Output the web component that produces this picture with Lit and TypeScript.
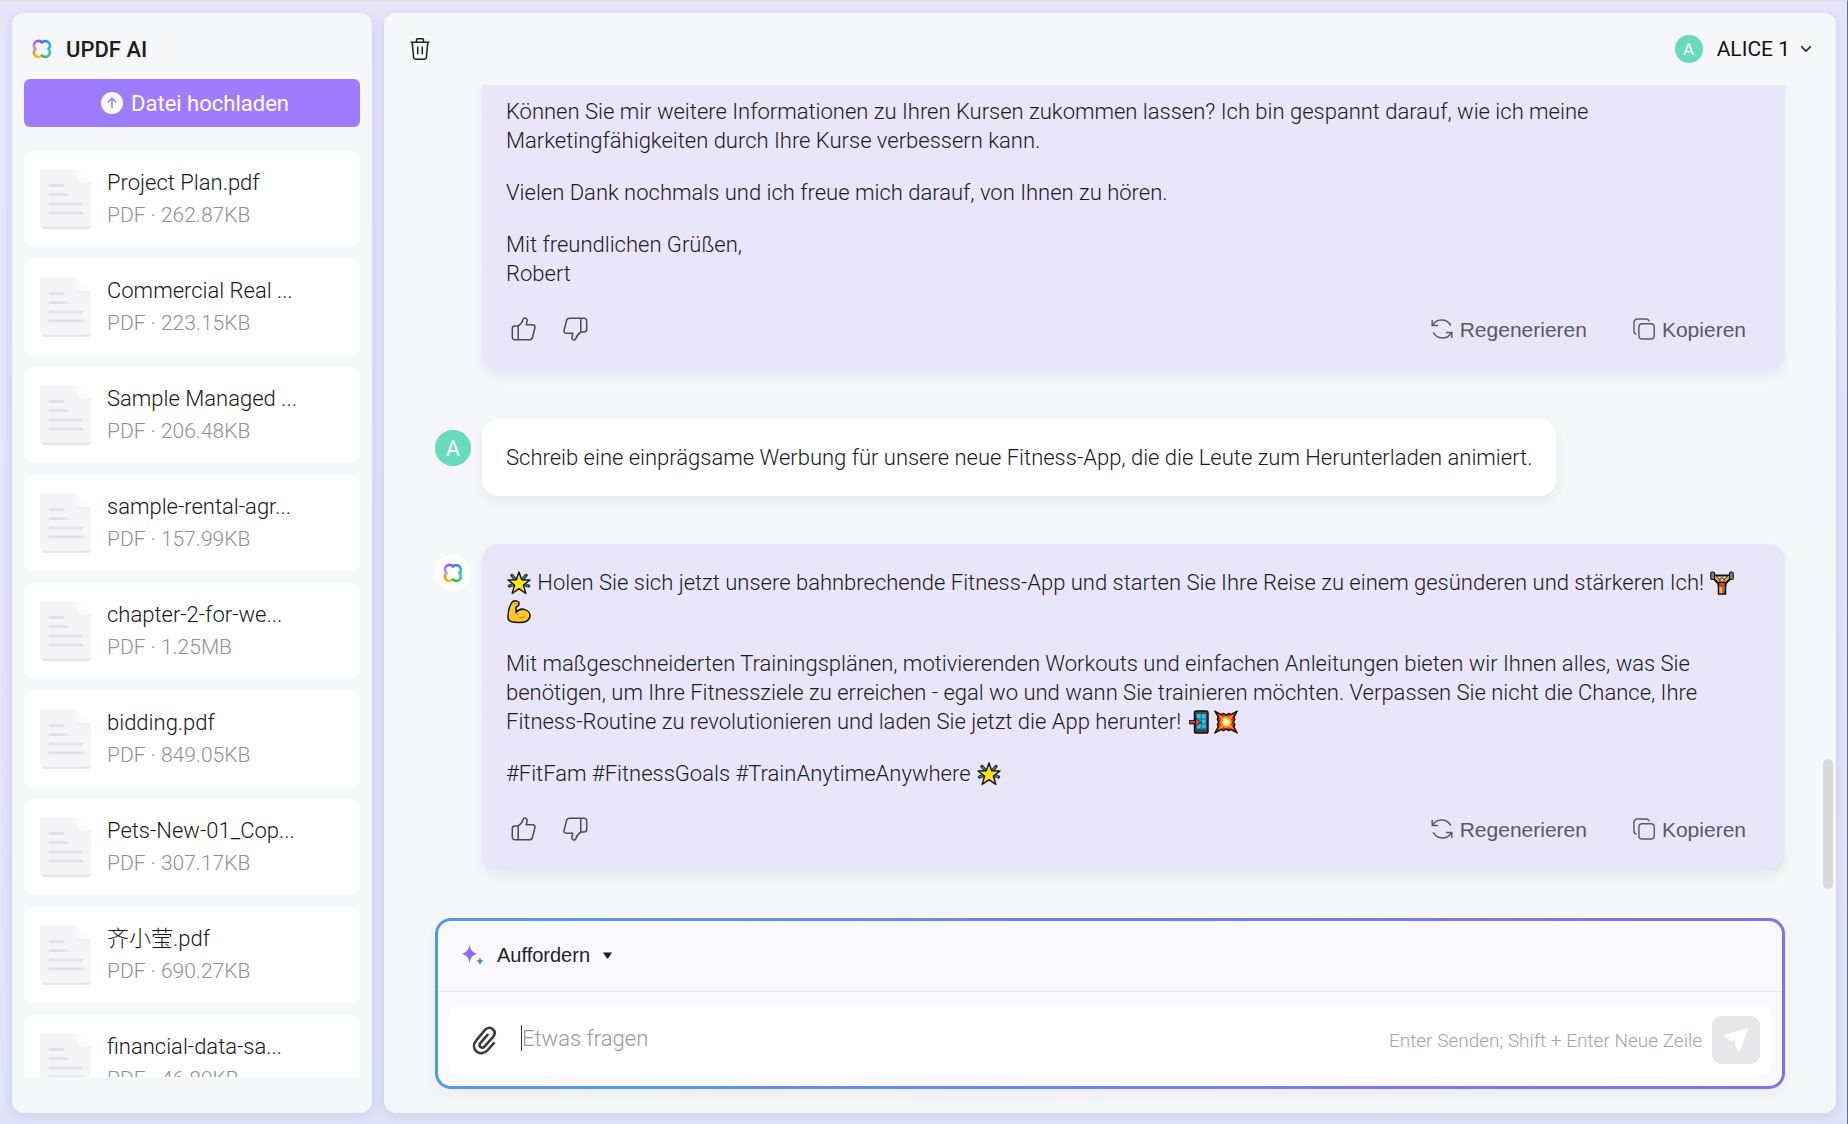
import { LitElement, html, svg, css, nothing, type TemplateResult } from "lit";
import { customElement, property } from "lit/decorators.js";

interface PdfFile {
  name: string;
  size: string;
}

const files: PdfFile[] = [
  { name: "Project Plan.pdf", size: "262.87KB" },
  { name: "Commercial Real ...", size: "223.15KB" },
  { name: "Sample Managed ...", size: "206.48KB" },
  { name: "sample-rental-agr...", size: "157.99KB" },
  { name: "chapter-2-for-we...", size: "1.25MB" },
  { name: "bidding.pdf", size: "849.05KB" },
  { name: "Pets-New-01_Cop...", size: "307.17KB" },
  { name: "齐小莹.pdf", size: "690.27KB" },
  { name: "financial-data-sa...", size: "46.89KB" },
];

const logo = html`<svg width="22" height="22" viewBox="0 0 22 22" fill="none" aria-hidden="true">
  <defs>
    <linearGradient id="tl" x1="0" y1="1" x2="1" y2="0"><stop offset="0" stop-color="#d08bf5" /><stop offset="1" stop-color="#8a4fe6" /></linearGradient>
    <linearGradient id="tr" x1="0" y1="0" x2="1" y2="1"><stop offset="0" stop-color="#2f7df0" /><stop offset="1" stop-color="#35b8ee" /></linearGradient>
    <linearGradient id="br" x1="1" y1="0" x2="0" y2="1"><stop offset="0" stop-color="#3fd6ae" /><stop offset="1" stop-color="#22b868" /></linearGradient>
    <linearGradient id="bl" x1="0" y1="0" x2="1" y2="1"><stop offset="0" stop-color="#f08a24" /><stop offset="1" stop-color="#fbc916" /></linearGradient>
  </defs>
  <g stroke-width="2.700" stroke-linecap="round">
    <path stroke="url(#bl)" d="M4.200 11.400A4.300 4.300 0 1 0 10.600 17.600" />
    <path stroke="url(#br)" d="M11.200 17.600A4.300 4.300 0 1 0 17.600 11.300" />
    <path stroke="url(#tl)" d="M4.200 10.800A4.300 4.300 0 1 1 10.800 4.300" />
    <path stroke="url(#tr)" d="M11.100 4.400A4.300 4.300 0 1 1 17.600 10.800" />
  </g>
</svg>`;

const uploadIcon = html`<svg width="22" height="22" viewBox="0 0 22 22" fill="none" aria-hidden="true">
  <circle cx="11" cy="11" r="11" fill="#fff" />
  <path d="M11 16V6.4M6.9 10.2 11 6.2l4.1 4" stroke="#9f7cff" stroke-width="1.5" />
</svg>`;

const fileIcon = html`<svg width="54" height="62" viewBox="0 0 54 62" fill="none" aria-hidden="true">
  <path d="M6 2h31l15 15v40a4 4 0 0 1-4 4H6a4 4 0 0 1-4-4V6a4 4 0 0 1 4-4z" fill="#e4e4e9" />
  <path d="M6 1h31l15 15v39a4 4 0 0 1-4 4H5a4 4 0 0 1-4-4V5a4 4 0 0 1 4-4z" fill="#f5f5f8" />
  <path d="M37 1l15 15H41a4 4 0 0 1-4-4z" fill="#fbfbfd" />
  <path d="M37 12a4 4 0 0 0 4 4h11" stroke="#ececf0" />
  <path d="M11 17.500h13M11 26.500h17M11 36h31M11 45h32" stroke="#e3e3e7" stroke-width="3" stroke-linecap="round" />
</svg>`;

const trashIcon = html`<svg width="20" height="24" viewBox="0 0 20 24" fill="none" stroke="#1f1f24" stroke-width="1.5" stroke-linejoin="round" aria-hidden="true">
  <path d="M.5 5.200h19M6.500 5V2.800a1 1 0 0 1 1-1h5a1 1 0 0 1 1 1V5M2.200 5.400l1.400 15a2 2 0 0 0 2 1.800h8.800a2 2 0 0 0 2-1.800l1.400-15M7.700 9.500v7.800M12.300 9.500v7.800" />
</svg>`;

const chevron = html`<svg width="12" height="8" viewBox="0 0 12 8" fill="none" aria-hidden="true"><path d="M1.200 1.200 6 6l4.800-4.800" stroke="#222" stroke-width="1.600" /></svg>`;

const thumbShape = svg`
  <path d="M7.200 9.500v13.300H4A2.700 2.700 0 0 1 1.300 20V11.600A2.700 2.700 0 0 1 4 9H7c2.300-1.400 4.200-3.300 5-6.300.3-1.200 1-1.700 2-1.600 1.600.2 2.400 1.500 2.100 3.200l-.9 3.400h6.200c1.900 0 2.900 1.300 2.500 3.100l-2.400 9.400c-.4 1.700-1.500 2.600-3.200 2.600H7.200" />`;
const thumbUp = html`<svg width="25" height="24" viewBox="0 0 25 24" fill="none" stroke="#4d4b59" stroke-width="1.500" stroke-linejoin="round" aria-hidden="true">${thumbShape}</svg>`;
const thumbDown = html`<svg width="25" height="24" viewBox="0 0 25 24" fill="none" stroke="#4d4b59" stroke-width="1.500" stroke-linejoin="round" aria-hidden="true"><g transform="rotate(180 12.500 12)">${thumbShape}</g></svg>`;

const regenIcon = html`<svg width="22" height="22" viewBox="0 0 22 22" fill="none" stroke="#5b5966" stroke-width="1.500" aria-hidden="true">
  <path d="M1.200 2v5.600h5.800M1.600 7.400C5 .6 15.500-.2 19.800 7.600M20.800 20v-5.600H15M20.400 14.600C17 21.400 6.500 22.200 2.200 14.400" />
</svg>`;

const copyIcon = html`<svg width="22" height="22" viewBox="0 0 23 23" fill="none" stroke="#5b5966" stroke-width="1.500" aria-hidden="true">
  <rect x="6.200" y="6" width="16" height="16" rx="3.500" />
  <path d="M17 3.500C16.500 1.800 15.300 1 13.500 1H4.500A3.500 3.500 0 0 0 1 4.500v9.200C1 15.500 1.800 16.700 3.600 17" />
</svg>`;

const sparkle = html`<svg width="22" height="22" viewBox="0 0 22 22" aria-hidden="true">
  <defs><linearGradient id="sp" x1="0" y1="0" x2="1" y2="1"><stop offset="0" stop-color="#a06bff" /><stop offset="1" stop-color="#7b6cf0" /></linearGradient></defs>
  <path d="M7.500.5C8.600 6 10 8 15 9.700 10 11.400 8.600 13.400 7.500 19 6.400 13.400 5 11.400 0 9.700 5 8 6.400 6 7.500.5z" fill="url(#sp)" />
  <path d="M18 13c.6 2.600 1.200 3.400 3.800 4-2.600.8-3.200 1.500-3.800 4.200-.6-2.700-1.200-3.400-3.800-4.200 2.600-.6 3.200-1.400 3.800-4z" fill="#3f86e6" />
</svg>`;

const clipIcon = html`<svg width="26" height="30" viewBox="0 0 26 30" fill="none" stroke="#3c3c40" stroke-width="2.600" stroke-linecap="round" aria-hidden="true">
  <path d="M22.800 18.200l-6 6.800c-3.300 3.700-8 4.200-11.300 1.400-3.300-2.900-3.400-7.400-.2-11.100L13.800 5.200c2.400-2.700 5.700-3 8-1 2.400 2.100 2.400 5.200.1 7.900L13.700 21.400c-1.300 1.500-3 1.600-4.200.6-1.300-1.100-1.300-2.600 0-4.200l7-8" />
</svg>`;

const sendIcon = html`<svg width="26" height="26" viewBox="0 0 26 26" aria-hidden="true">
  <path d="M24.300 1.300 1.300 8c-1 .3-1.100 1.300-.2 1.900l8.300 4.300c1-.7 3-2.500 4.700-4.200-1.100 1.900-2.500 4.300-2.900 5.400l3.700 8.600c.5 1 1.500 1 2 0L25 2.300c.3-.8 0-1.200-.7-1z" fill="#fff" />
</svg>`;

/* Pictograms used inside message text */
const emojiArt = {
  star: {
    label: "🌟",
    art: svg`<g stroke="#1c2b33" stroke-width="3.400" stroke-linecap="round"><path d="M5 4.500l3 3.500M19 4.500l-3 3.500M2.500 15l4-1.500M21.500 15l-4-1.500" /></g>
      <path d="M5 4.500l3 3.500M19 4.500l-3 3.500M2.500 15l4-1.500M21.500 15l-4-1.500" stroke="#2b8fa8" stroke-width="1.400" />
      <path d="M12 1l2.700 7.800 8.300.2-6.600 5 2.400 8.500L12 17.600 5.200 22.500 7.600 14 1 9l8.300-.2z" fill="#ffe21a" stroke="#111" stroke-width="1.400" stroke-linejoin="round" />`,
  },
  lifter: {
    label: "🏋️",
    art: svg`<path d="M3 4.500h18" stroke="#111" stroke-width="2" />
      <path d="M4 6l6 6v3M20 6l-6 6v3" stroke="#111" stroke-width="5" fill="none" />
      <path d="M8.500 11h7v12h-7z" fill="#e33a22" stroke="#111" stroke-width="1.500" />
      <path d="M4.500 5.500l5 5M19.500 5.500l-5 5" stroke="#f8b52c" stroke-width="2.400" />
      <circle cx="12" cy="9" r="2.300" fill="#f8b52c" stroke="#111" stroke-width=".8" />
      <path d="M9.300 16h3v6.200h-3z" fill="#f8b52c" /><path d="M12.300 16h2.400v4h-2.400z" fill="#2e8fc4" />
      <rect x=".8" y="1" width="3.600" height="7.500" rx="1.200" fill="#8a8a8a" stroke="#111" stroke-width="1.200" />
      <rect x="19.600" y="1" width="3.600" height="7.500" rx="1.200" fill="#8a8a8a" stroke="#111" stroke-width="1.200" />`,
  },
  arm: {
    label: "💪",
    art: svg`<path d="M5.500 1.600C8 .2 11.500.6 12 3c.3 1.600-.6 3-2 3.600L9 7.400v5.200c2.500-3.200 6-4 9-3 4 1.300 5.600 4.600 4.800 7.600-1.200 4.200-6 5.400-11 5.400C6.500 22.600 2 21.800 1.200 19 .7 13 2 6 5.500 1.600z" fill="#fcc62f" stroke="#111" stroke-width="1.500" stroke-linejoin="round" />
      <path d="M9 12.600c1 .6 1.500 1.500 1.700 2.600M12.500 17.500c2 .6 4 .2 5.500-1.300M7.600 3.400l2.400.3" stroke="#b9781a" stroke-width="1" fill="none" />`,
  },
  phone: {
    label: "📲",
    art: svg`<rect x="6.500" y="1" width="13.500" height="22" rx="1.800" fill="#3d4a52" stroke="#111" stroke-width="1.500" />
      <path d="M8.800 4h9v14.500h-9z" fill="#2fc0e8" /><path d="M8.800 9h9M8.800 13.800h9M13.300 4v14.500" stroke="#16627d" stroke-width=".9" />
      <path d="M1 12.200h7.500" stroke="#111" stroke-width="4.200" /><path d="M1.500 12.200h7" stroke="#e8462a" stroke-width="2" /><path d="M7.500 8l5.200 4.200-5.200 4.200z" fill="#e8462a" stroke="#111" stroke-width=".8" />`,
  },
  boom: {
    label: "💥",
    art: svg`<path d="M.8 1l6.300 3.500L9.500 3.400 12 5l2.800-1.600 2 1.100L23.200 1l-3.400 6.300 1 2.200L19.300 12l1.500 2.700-1 2.200 3.400 6.100-6.300-3.400-2.200 1L12 19.200l-2.600 1.400-2.300-1L.8 23l3.500-6.300-1-2.200L4.700 12 3.300 9.300l1-2.200z" fill="#d92c1a" stroke="#111" stroke-width="1.400" stroke-linejoin="round" />
      <path d="M4.500 4.500l5 2.400L12 5.800l2.600 1.100 5-2.400-2.400 5L18.300 12l-1.100 2.600 2.400 5-5-2.400L12 18.300l-2.500-1.100-5 2.400 2.400-5L5.800 12l1.100-2.500z" fill="#fb8c1e" />
      <path d="M12 7.500l1.300 2.200 2.700-.6-.8 2.600 1.600 1.700-2.300.7-.3 2.400-2.200-1.200-2.400 1-.1-2.500-2-1.400 1.700-1.600-.6-2.500 2.400.5z" fill="#fff0a0" />`,
  },
};

const emoji = (name: keyof typeof emojiArt) =>
  html`<svg class="emoji" viewBox="0 0 24 24" role="img" aria-label=${emojiArt[name].label}>${emojiArt[name].art}</svg>`;

const controls = css`
  * {
    box-sizing: border-box;
  }
  button,
  input {
    font: inherit;
    color: inherit;
    background: none;
    border: 0;
    padding: 0;
    margin: 0;
  }
  button {
    display: flex;
    align-items: center;
    cursor: pointer;
  }
  svg {
    display: block;
    flex: none;
  }
`;

@customElement("file-sidebar")
class FileSidebar extends LitElement {
  static styles = [
    controls,
    css`
      :host {
        display: flex;
        flex-direction: column;
        padding: 12px 12px 36px;
        min-height: 0;
      }
      .brand {
        display: flex;
        align-items: center;
        gap: 13px;
        height: 48px;
        padding-left: 7px;
        margin: 0 0 6px;
        font-size: 22px;
        font-weight: 500;
        color: #1d1d20;
      }
      .upload {
        justify-content: center;
        gap: 8px;
        height: 48px;
        padding-left: 6px;
        flex: none;
        border-radius: 6px;
        background: #9f7cff;
        color: #fff;
        font-size: 22px;
        font-weight: 400;
      }
      .list {
        list-style: none;
        margin: 24px 0 0;
        padding: 0;
        flex: 1;
        min-height: 0;
        overflow: hidden;
        display: flex;
        flex-direction: column;
        gap: 12px;
      }
      .card {
        display: flex;
        align-items: center;
        gap: 14px;
        flex: none;
        height: 96px;
        padding: 0 15px;
        border-radius: 9px;
        background: #fff;
      }
      .name,
      .meta {
        line-height: 33px;
        white-space: nowrap;
      }
      .name {
        font-size: 22px;
        color: #18181b;
      }
      .meta {
        font-size: 21px;
        color: #8f8f95;
      }
    `,
  ];

  render() {
    return html`
      <h1 class="brand">${logo}<span>UPDF AI</span></h1>
      <button class="upload" type="button">${uploadIcon}<span>Datei hochladen</span></button>
      <ul class="list">
        ${files.map(
          (f) => html`<li class="card">
            ${fileIcon}
            <div>
              <div class="name">${f.name}</div>
              <div class="meta">PDF · ${f.size}</div>
            </div>
          </li>`,
        )}
      </ul>
    `;
  }
}

@customElement("chat-message")
class ChatMessage extends LitElement {
  @property() from: "user" | "assistant" = "assistant";
  @property({ type: Boolean, reflect: true }) continued = false;

  static styles = [
    controls,
    css`
      :host {
        display: grid;
        grid-template-columns: 36px minmax(0, 1fr);
        column-gap: 11px;
        flex: none;
      }
      .avatar {
        width: 36px;
        height: 36px;
        margin-top: 11px;
        border-radius: 18px;
        display: grid;
        place-items: center;
        background: #66dcbc;
        color: #fff;
        font-size: 22px;
        font-weight: 400;
      }
      .avatar.assistant {
        background: #fff;
      }
      .bubble {
        grid-column: 2;
        justify-self: start;
        padding: 24px;
        border-radius: 16px;
        background: #fff;
        box-shadow: 0 6px 12px rgba(60, 60, 90, 0.07);
      }
      .bubble.assistant {
        justify-self: stretch;
        background: #e9e6fa;
      }
      :host([continued]) .bubble {
        padding-top: 12px;
        border-radius: 0 0 16px 16px;
      }
      .text {
        display: flex;
        flex-direction: column;
        gap: 23px;
      }
      ::slotted(p) {
        margin: 0;
      }
      .actions {
        display: flex;
        align-items: center;
        height: 36px;
        margin-top: 23px;
        padding: 0 15px 0 5px;
        gap: 27px;
        color: #5b5966;
        font-family: "Liberation Sans", Arial, sans-serif;
        font-size: 21px;
      }
      .actions .labelled {
        gap: 7px;
      }
      .spacer {
        flex: 1;
      }
      .copy {
        margin-left: 19px;
      }
    `,
  ];

  render() {
    const ai = this.from === "assistant";
    return html`
      ${this.continued ? nothing : html`<div class="avatar ${this.from}">${ai ? logo : "A"}</div>`}
      <div class="bubble ${this.from}">
        <div class="text"><slot></slot></div>
        ${ai
          ? html`<div class="actions">
              <button type="button" aria-label="Gefällt mir">${thumbUp}</button>
              <button type="button" aria-label="Gefällt mir nicht">${thumbDown}</button>
              <span class="spacer"></span>
              <button type="button" class="labelled">${regenIcon}<span>Regenerieren</span></button>
              <button type="button" class="labelled copy">${copyIcon}<span>Kopieren</span></button>
            </div>`
          : nothing}
      </div>
    `;
  }
}

@customElement("prompt-composer")
class PromptComposer extends LitElement {
  static styles = [
    controls,
    css`
      :host {
        display: block;
        box-sizing: border-box;
        flex: none;
        border: 3px solid transparent;
        border-radius: 16px;
        background:
          linear-gradient(#f9f8fe, #f9f8fe) padding-box,
          linear-gradient(90deg, #539be9, #6f82e6 50%, #8570e8) border-box;
        box-shadow: 0 6px 12px rgba(60, 60, 90, 0.06);
      }
      .bar {
        display: flex;
        align-items: center;
        height: 71px;
        padding: 0 24px 2px;
        border-bottom: 1px solid #e8e7f5;
      }
      .prompt {
        gap: 13px;
        font-family: "Liberation Sans", Arial, sans-serif;
        font-size: 20px;
        color: #232326;
      }
      .row {
        display: flex;
        align-items: center;
        height: 72px;
        margin: 12px 10px 10px;
        padding: 0 12px 0 23px;
        border-radius: 14px;
        background: #fff;
      }
      .caret {
        width: 1px;
        height: 26px;
        margin: 0 0 4px 24px;
        background: #333;
      }
      .ask {
        flex: 1;
        min-width: 0;
        height: 32px;
        margin-bottom: 4px;
        font-size: 22px;
        outline: none;
      }
      .ask::placeholder {
        color: #98989d;
        opacity: 1;
      }
      .hint {
        margin-right: 10px;
        font-size: 19px;
        color: #a3a3a7;
        white-space: nowrap;
      }
      .send {
        justify-content: center;
        width: 48px;
        height: 48px;
        border-radius: 9px;
        background: #e8e8ea;
      }
    `,
  ];

  render() {
    return html`
      <div class="bar">
        <button class="prompt" type="button">
          ${sparkle}<span>Auffordern</span>
          <svg width="9" height="7" viewBox="0 0 9 7" aria-hidden="true"><path d="M0 .5h9L5 6.500H4z" fill="#1c1c1f" /></svg>
        </button>
      </div>
      <div class="row">
        <button type="button" aria-label="Anhang">${clipIcon}</button>
        <span class="caret"></span>
        <input class="ask" type="text" placeholder="Etwas fragen" aria-label="Etwas fragen" />
        <span class="hint">Enter Senden; Shift + Enter Neue Zeile</span>
        <button class="send" type="button" aria-label="Senden">${sendIcon}</button>
      </div>
    `;
  }
}

@customElement("app-root")
class AppRoot extends LitElement {
  static styles = [
    controls,
    css`
      :host {
        display: grid;
        grid-template-columns: 360px minmax(0, 1fr);
        gap: 12px;
        box-sizing: border-box;
        height: 100vh;
        overflow: hidden;
        padding: 12px 11px 11px 12px;
        border-top: 1px solid #dedde4;
        border-right: 1px solid #6b6a88;
        background: linear-gradient(180deg, #e8e5fb 0%, #e5e2fa 60%, #e0e5f9 100%);
        font-family: Roboto, "Noto Sans CJK SC", sans-serif;
        font-weight: 300;
        color: #1b1a26;
      }
      .panel {
        border-radius: 12px;
        background: #f6f7f9;
        box-shadow: 0 2px 12px rgba(90, 90, 150, 0.18);
        min-height: 0;
      }
      .chat {
        display: grid;
        grid-template-columns: minmax(0, 1fr) 10px;
        grid-template-rows: 72px minmax(0, 1fr);
        padding-right: 3px;
      }
      .head {
        grid-column: 1 / -1;
        display: flex;
        align-items: center;
        justify-content: space-between;
        padding: 0 21px 0 26px;
      }
      .account {
        gap: 14px;
        font-size: 21px;
        font-weight: 400;
        color: #111;
      }
      .badge {
        display: grid;
        place-items: center;
        width: 28px;
        height: 28px;
        border-radius: 14px;
        background: #66dcbc;
        color: #fff;
        font-size: 17px;
      }
      .account svg {
        margin-left: -4px;
      }
      .body {
        display: flex;
        flex-direction: column;
        min-height: 0;
        padding: 0 38px 24px 51px;
      }
      .messages {
        flex: 1;
        min-height: 0;
        margin: 0 -24px;
        padding: 0 24px;
        overflow: hidden;
        display: flex;
        flex-direction: column;
        gap: 48px;
        font-size: 22px;
        line-height: 29px;
      }
      .messages p {
        margin: 0;
      }
      .emoji {
        display: inline-block;
        width: 24px;
        height: 24px;
        margin: 0 1px;
        vertical-align: -5px;
        fill: none;
      }
      .track {
        display: flex;
        flex-direction: column;
        justify-content: flex-end;
        padding-bottom: 224px;
      }
      .thumb {
        height: 130px;
        border-radius: 5px;
        background: #d9d9dc;
      }
    `,
  ];

  private lines(...rows: (string | TemplateResult)[]) {
    return html`<p>${rows.map((r, i) => html`${i ? html`<br />` : nothing}${r}`)}</p>`;
  }

  render() {
    return html`
      <file-sidebar class="panel"></file-sidebar>
      <main class="panel chat">
        <header class="head">
          <button type="button" aria-label="Löschen">${trashIcon}</button>
          <button type="button" class="account">
            <span class="badge">A</span><span>ALICE 1</span>${chevron}
          </button>
        </header>
        <div class="body">
          <div class="messages">
            <chat-message from="assistant" continued>
              ${this.lines(
                "Können Sie mir weitere Informationen zu Ihren Kursen zukommen lassen? Ich bin gespannt darauf, wie ich meine",
                "Marketingfähigkeiten durch Ihre Kurse verbessern kann.",
              )}
              ${this.lines("Vielen Dank nochmals und ich freue mich darauf, von Ihnen zu hören.")}
              ${this.lines("Mit freundlichen Grüßen,", "Robert")}
            </chat-message>
            <chat-message from="user">
              ${this.lines("Schreib eine einprägsame Werbung für unsere neue Fitness-App, die die Leute zum Herunterladen animiert.")}
            </chat-message>
            <chat-message from="assistant">
              ${this.lines(
                html`${emoji("star")} Holen Sie sich jetzt unsere bahnbrechende Fitness-App und starten Sie Ihre Reise zu einem gesünderen und stärkeren Ich! ${emoji("lifter")}`,
                emoji("arm"),
              )}
              ${this.lines(
                "Mit maßgeschneiderten Trainingsplänen, motivierenden Workouts und einfachen Anleitungen bieten wir Ihnen alles, was Sie",
                "benötigen, um Ihre Fitnessziele zu erreichen - egal wo und wann Sie trainieren möchten. Verpassen Sie nicht die Chance, Ihre",
                html`Fitness-Routine zu revolutionieren und laden Sie jetzt die App herunter! ${emoji("phone")}${emoji("boom")}`,
              )}
              ${this.lines(html`#FitFam #FitnessGoals #TrainAnytimeAnywhere ${emoji("star")}`)}
            </chat-message>
          </div>
          <prompt-composer></prompt-composer>
        </div>
        <div class="track"><div class="thumb"></div></div>
      </main>
    `;
  }
}
